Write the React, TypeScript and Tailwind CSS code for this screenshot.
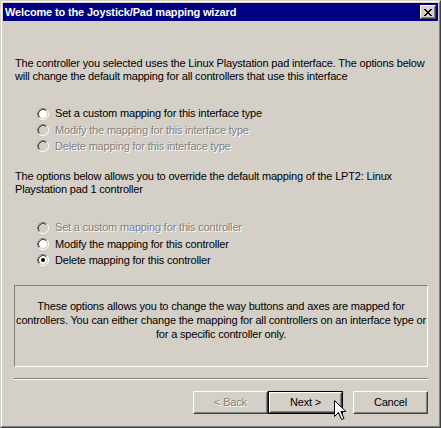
import type { ReactNode } from 'react'

type RadioProps = {
  label: string
  checked?: boolean
  disabled?: boolean
  className?: string
}

function RadioDot({ checked, disabled }: { checked?: boolean; disabled?: boolean }) {
  return (
    <svg width="12" height="12" viewBox="0 0 12 12" className="shrink-0" aria-hidden="true">
      <circle cx="6" cy="6" r="4" fill={disabled ? '#d4d0c8' : '#ffffff'} />
      <path d="M2.11 9.89 A5.5 5.5 0 0 1 9.89 2.11" fill="none" stroke="#808080" strokeWidth="1" />
      <path d="M9.89 2.11 A5.5 5.5 0 0 1 2.11 9.89" fill="none" stroke="#ffffff" strokeWidth="1" />
      <path d="M2.82 9.18 A4.5 4.5 0 0 1 9.18 2.82" fill="none" stroke="#404040" strokeWidth="1" />
      <path d="M9.18 2.82 A4.5 4.5 0 0 1 2.82 9.18" fill="none" stroke="#d4d0c8" strokeWidth="1" />
      {checked && <circle cx="6" cy="6" r="2" fill={disabled ? '#808080' : '#000000'} />}
    </svg>
  )
}

function Radio({ label, checked, disabled, className = 'h-[16px]' }: RadioProps) {
  return (
    <div className={`flex items-center pl-[23px] ${className}`}>
      <RadioDot checked={checked} disabled={disabled} />
      <span
        className={`ml-[6px] whitespace-nowrap leading-[13px] ${
          disabled ? 'text-[#808080] [text-shadow:1px_1px_0_#ffffff]' : 'text-black'
        }`}
      >
        {label}
      </span>
    </div>
  )
}

function Button({
  children,
  disabled,
  isDefault,
  className = '',
}: {
  children: ReactNode
  disabled?: boolean
  isDefault?: boolean
  className?: string
}) {
  const face = (
    <div className="flex h-full w-full border border-t-white border-l-white border-r-[#404040] border-b-[#404040]">
      <div className="flex h-full w-full items-center justify-center border border-t-[#d4d0c8] border-l-[#d4d0c8] border-r-[#808080] border-b-[#808080]">
        <span
          className={
            disabled ? 'text-[#808080] [text-shadow:1px_1px_0_#ffffff]' : 'text-black'
          }
        >
          {children}
        </span>
      </div>
    </div>
  )
  return (
    <div className={`h-[23px] w-[75px] ${className}`}>
      {isDefault ? <div className="h-full w-full border border-black">{face}</div> : face}
    </div>
  )
}

function CloseButton() {
  return (
    <div className="h-[14px] w-[16px] border border-t-white border-l-white border-r-[#404040] border-b-[#404040] bg-[#d4d0c8]">
      <div className="flex h-full w-full items-center justify-center border border-t-[#d4d0c8] border-l-[#d4d0c8] border-r-[#808080] border-b-[#808080]">
        <svg width="8" height="7" viewBox="0 0 8 7" shapeRendering="crispEdges" aria-hidden="true">
          <path
            d="M0 0h2v1h-2zM6 0h2v1h-2zM1 1h2v1h-2zM5 1h2v1h-2zM2 2h4v1h-4zM3 3h2v1h-2zM2 4h4v1h-4zM1 5h2v1h-2zM5 5h2v1h-2zM0 6h2v1h-2zM6 6h2v1h-2z"
            fill="#000000"
          />
        </svg>
      </div>
    </div>
  )
}

function Cursor() {
  return (
    <svg
      width="13"
      height="21"
      viewBox="0 0 13 21"
      className="pointer-events-none absolute left-[333px] top-[399px]"
      aria-hidden="true"
    >
      <path
        d="M0.5 0.5 L0.5 16.5 L4.5 12.5 L7.5 19.5 L10 18.5 L7 11.5 L12 11.5 Z"
        fill="#ffffff"
        stroke="#000000"
        strokeWidth="1"
        strokeLinejoin="miter"
      />
    </svg>
  )
}

export default function App() {
  return (
    <div className="relative h-[428px] w-[441px] border border-t-[#d4d0c8] border-l-[#d4d0c8] border-r-[#404040] border-b-[#404040] bg-[#d4d0c8] font-['Liberation_Sans',Arial,sans-serif] text-[11px] tracking-[-0.175px] text-black">
      <div className="flex h-full flex-col border border-t-white border-l-white border-r-[#808080] border-b-[#808080] p-px">
        {/* title bar */}
        <div className="flex h-[18px] shrink-0 items-center justify-between bg-[#000080] pl-[2px] pr-[2px]">
          <span className="whitespace-nowrap text-[11px] font-bold leading-[13px] tracking-[-0.15px] text-white">
            Welcome to the Joystick/Pad mapping wizard
          </span>
          <CloseButton />
        </div>

        {/* wizard body */}
        <div className="flex flex-1 flex-col pl-[11px] pr-[10px]">
          <p className="mt-[36px] whitespace-nowrap pl-px leading-[13px]">
            The controller you selected uses the Linux Playstation pad interface. The options below
            <br />
            will change the default mapping for all controllers that use this interface
          </p>

          <div className="mt-[22px] flex flex-col">
            <Radio label="Set a custom mapping for this interface type" className="h-[17px]" />
            <Radio label="Modify the mapping for this interface type" disabled />
            <Radio label="Delete mapping for this interface type" disabled />
          </div>

          <p className="mt-[16px] whitespace-nowrap pl-px leading-[13px]">
            The options below allows you to override the default mapping of the LPT2: Linux
            <br />
            Playstation pad 1 controller
          </p>

          <div className="mt-[23px] flex flex-col">
            <Radio label="Set a custom mapping for this controller" disabled className="h-[17px]" />
            <Radio label="Modify the mapping for this controller" />
            <Radio label="Delete mapping for this controller" checked />
          </div>

          <div className="mt-[17px] h-[82px] border border-t-[#808080] border-l-[#808080] border-r-white border-b-white pt-[13px] text-center leading-[14px] whitespace-nowrap">
            These options allows you to change the way buttons and axes are mapped for
            <br />
            controllers. You can either change the mapping for all controllers on an interface type or
            <br />
            for a specific controller only.
          </div>

          <div className="mt-[11px] border-t border-b border-t-[#808080] border-b-white" />

          <div className="mt-[11px] flex justify-end">
            <Button disabled>&lt; Back</Button>
            <Button isDefault>Next &gt;</Button>
            <Button className="ml-[10px]">Cancel</Button>
          </div>
        </div>
      </div>
      <Cursor />
    </div>
  )
}
